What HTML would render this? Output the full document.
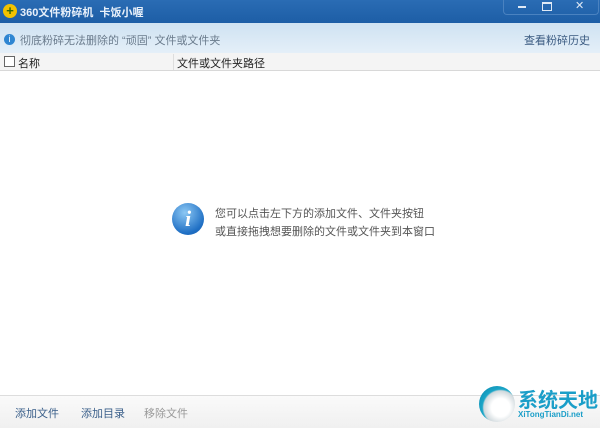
<!DOCTYPE html><html><head><meta charset="utf-8"><style>
body{margin:0;width:600px;height:427px;overflow:hidden;background:#fff;font-family:"Liberation Sans","Noto Sans CJK SC",sans-serif;font-size:11px;position:relative}
.a{position:absolute}
</style></head><body>
<div class="a" style="left:0;top:0;width:600px;height:23px;background:linear-gradient(#2a6cb4,#1d5ea6)"></div>
<div class="a" style="left:3px;top:4px;width:14px;height:14px;border-radius:50%;background:#f2c200;color:#3a6a00;font-size:13px;line-height:14px;text-align:center;font-weight:bold">+</div>
<div class="a" style="left:20px;top:4px;color:#e8f0fa;font-size:11px;font-weight:bold">360文件粉碎机&nbsp;&nbsp;卡饭小喔</div>
<div class="a" style="left:503px;top:0;width:94px;height:14px;border:1px solid #4a82c0;border-top:none;border-radius:0 0 4px 4px;color:#dfe9f5;font-size:11px;line-height:13px">
<span class="a" style="left:14px;top:6px;width:8px;height:2px;background:#dfe9f5"></span>
<span class="a" style="left:38px;top:2px;width:8px;height:6px;border:1px solid #dfe9f5;border-top-width:2px"></span>
<span class="a" style="left:71px;top:0">✕</span></div>
<div class="a" style="left:0;top:23px;width:600px;height:30px;background:linear-gradient(#cfe2f2,#e4eff8)"></div>
<div class="a" style="left:4px;top:34px;width:11px;height:11px;border-radius:50%;background:#2f86d2;color:#fff;font-size:9px;line-height:11px;text-align:center">i</div>
<div class="a" style="left:20px;top:32px;color:#6a7b8c">彻底粉碎无法删除的 “顽固” 文件或文件夹</div>
<div class="a" style="left:524px;top:32px;color:#3a5a80">查看粉碎历史</div>
<div class="a" style="left:0;top:53px;width:600px;height:17px;background:#f4f4f4;border-bottom:1px solid #d8d8d8"></div>
<div class="a" style="left:4px;top:56px;width:9px;height:9px;border:1px solid #666;background:#fff"></div>
<div class="a" style="left:18px;top:55px;color:#222">名称</div>
<div class="a" style="left:173px;top:54px;width:1px;height:16px;background:#ddd"></div>
<div class="a" style="left:177px;top:55px;color:#222">文件或文件夹路径</div>
<div class="a" style="left:172px;top:203px;width:32px;height:32px;border-radius:50%;background:radial-gradient(circle at 40% 30%,#8cc8f4,#1f6fc4 70%,#155aa8);color:#fff;font:italic bold 22px 'Liberation Serif',serif;text-align:center;line-height:32px">i</div>
<div class="a" style="left:215px;top:205px;color:#555;line-height:18px">您可以点击左下方的添加文件、文件夹按钮<br>或直接拖拽想要删除的文件或文件夹到本窗口</div>
<div class="a" style="left:0;top:395px;width:600px;height:32px;background:linear-gradient(#fafafa,#f0f0f0);border-top:1px solid #ddd"></div>
<div class="a" style="left:15px;top:405px;color:#3a5f8a">添加文件</div>
<div class="a" style="left:81px;top:405px;color:#3a5f8a">添加目录</div>
<div class="a" style="left:144px;top:405px;color:#999">移除文件</div>
<div class="a" style="left:479px;top:386px;width:36px;height:36px;border-radius:50%;background:radial-gradient(circle at 60% 60%,#fff 30%,#cfd8dc 55%,#1aa6c8 60%,#0b7fa6)"></div>
<div class="a" style="left:518px;top:384px;color:#1a9ec8;font-size:20px;font-weight:bold">系统天地</div>
<div class="a" style="left:518px;top:410px;color:#1a9ec8;font-size:8px;font-weight:bold">XiTongTianDi.net</div>
</body></html>
